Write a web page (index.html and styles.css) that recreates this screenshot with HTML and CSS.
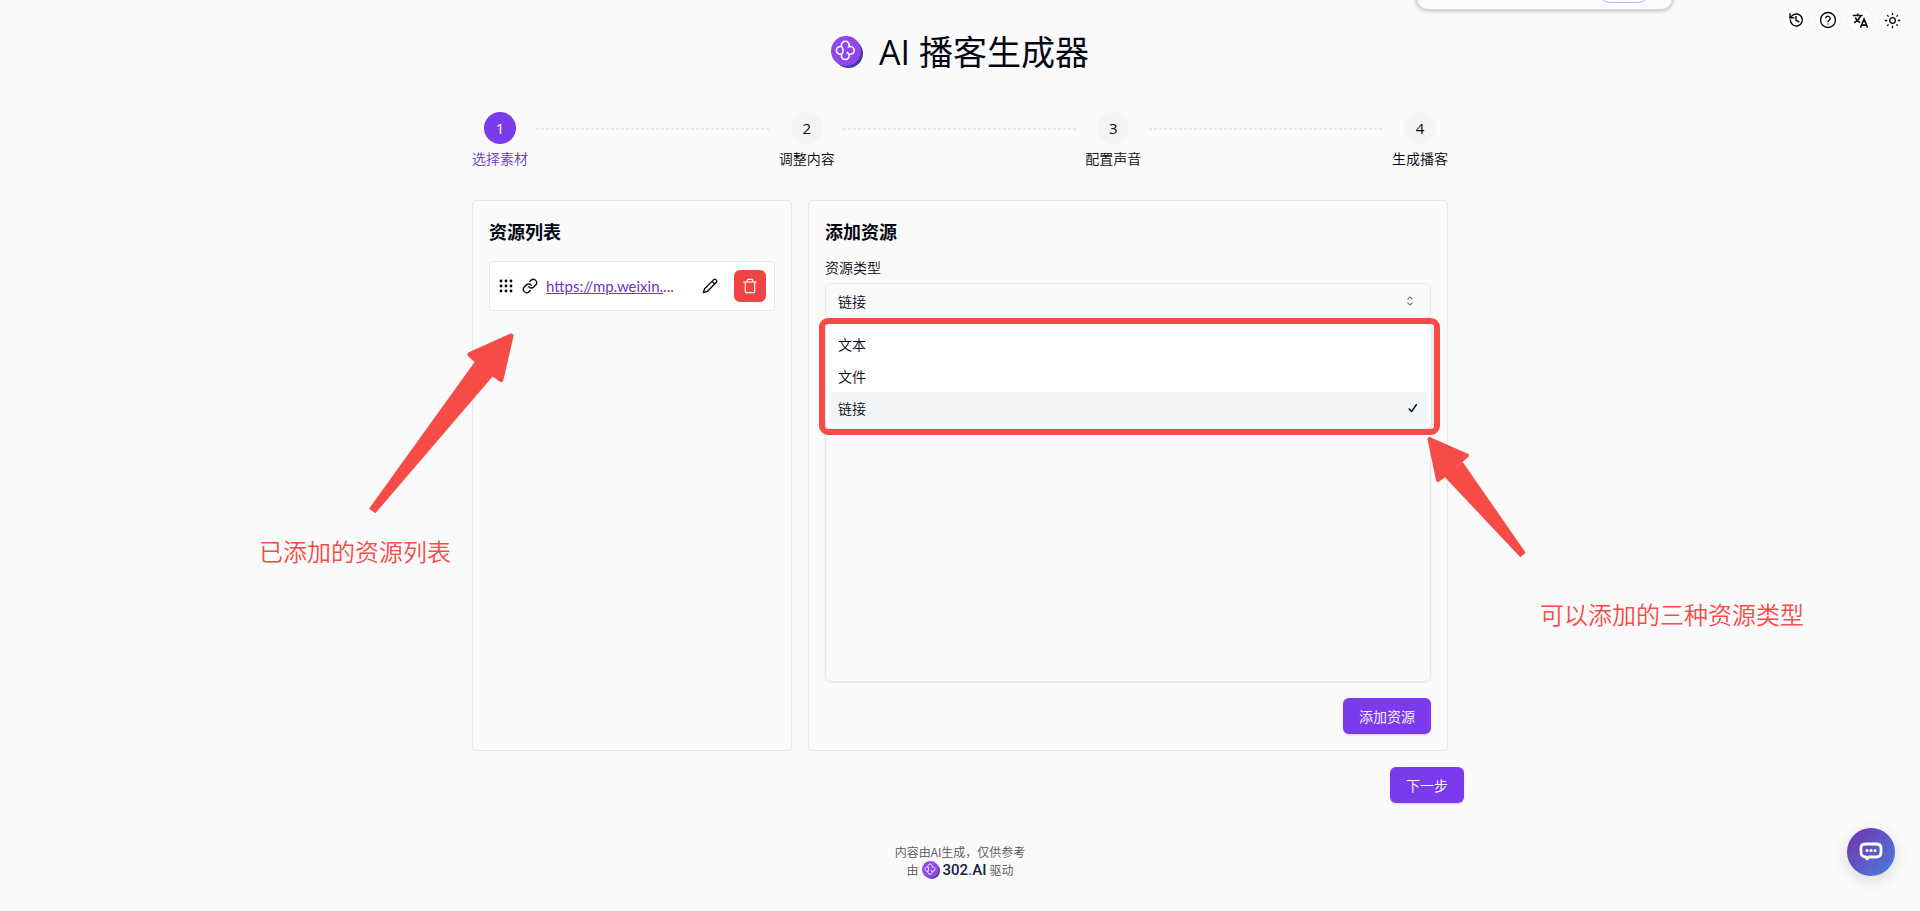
FILE: index.html
```
<!DOCTYPE html>
<html lang="zh-CN">
<head>
<meta charset="utf-8">
<meta name="viewport" content="width=device-width, initial-scale=1">
<title>AI 播客生成器</title>
<link rel="stylesheet" href="styles.css">
</head>
<body>
<svg class="defs" width="0" height="0" aria-hidden="true">
  <defs>
    <symbol id="logo" viewBox="0 0 32 32">
      <circle cx="17.500" cy="17.500" r="14.500" fill="#443aa0"/>
      <circle cx="15" cy="15" r="15" fill="#8e47ea"/>
      <path d="M10.800 10.800a3.900 3.900 0 1 1 7 0a3.900 3.900 0 1 1 0 7.200a3.900 3.900 0 1 1-7 0a3.900 3.900 0 1 1 0-7.200M10.800 10.800q2.400 3.600 0 7.200M17.800 18l-1.800-1.600" fill="none" stroke="#fff" stroke-width="1.500" stroke-linecap="round"/>
    </symbol>
  </defs>
</svg>

<div class="popup" aria-hidden="true"><span class="popup-pill"></span></div>

<nav class="tools" aria-label="工具">
  <button type="button" class="tool" aria-label="历史"><svg width="16" height="16" viewBox="0 0 24 24" fill="none" stroke="currentColor" stroke-width="2.200" stroke-linecap="square"><path d="M3.500 12a9 9 0 1 0 2.600-6.400L3 8.500M3 3v5.500h5.500M12 7v5.500l4 2"/></svg></button>
  <button type="button" class="tool" aria-label="帮助"><svg width="18" height="18" viewBox="0 0 24 24" fill="none" stroke="currentColor" stroke-width="1.800" stroke-linecap="round"><circle cx="12" cy="12" r="10"/><path d="M9.100 9a3 3 0 0 1 5.800 1c0 2-2.900 2.500-2.900 4M12 17.200v.1"/></svg></button>
  <button type="button" class="tool" aria-label="语言"><svg width="17" height="17" viewBox="0 0 24 24" fill="none" stroke="currentColor" stroke-width="2.200"><path d="M1 5h14M8 2v3M12 5c-1 4-4.500 8-9 10M4.500 8c1.500 3 4 5.500 7 7M12 22l5-12 5 12M14 18.500h6.500"/></svg></button>
  <button type="button" class="tool" aria-label="主题"><svg width="17" height="17" viewBox="0 0 24 24" fill="none" stroke="currentColor" stroke-width="1.900"><circle cx="12" cy="12" r="4"/><path d="M12 1v3.500M12 19.500V23M1 12h3.500M19.500 12H23M4.500 4.500l2 2M17.500 17.500l2 2M4.500 19.500l2-2M17.500 6.500l2-2"/></svg></button>
</nav>

<div class="page">
  <header class="title">
    <svg width="32" height="32" aria-hidden="true"><use href="#logo"/></svg>
    <h1>AI 播客生成器</h1>
  </header>

  <main>
    <ol class="steps">
      <li class="step active"><span class="num">1</span><span>选择素材</span></li>
      <li class="line" aria-hidden="true"></li>
      <li class="step"><span class="num">2</span><span>调整内容</span></li>
      <li class="line" aria-hidden="true"></li>
      <li class="step"><span class="num">3</span><span>配置声音</span></li>
      <li class="line" aria-hidden="true"></li>
      <li class="step"><span class="num">4</span><span>生成播客</span></li>
    </ol>

    <div class="panels">
      <section class="card">
        <h2>资源列表</h2>
        <div class="resource">
          <svg width="16" height="16" viewBox="0 0 16 16" fill="currentColor" aria-hidden="true"><circle cx="3" cy="3" r="1.400"/><circle cx="8" cy="3" r="1.400"/><circle cx="13" cy="3" r="1.400"/><circle cx="3" cy="8" r="1.400"/><circle cx="8" cy="8" r="1.400"/><circle cx="13" cy="8" r="1.400"/><circle cx="3" cy="13" r="1.400"/><circle cx="8" cy="13" r="1.400"/><circle cx="13" cy="13" r="1.400"/></svg>
          <svg width="16" height="16" viewBox="0 0 24 24" fill="none" stroke="currentColor" stroke-width="2" stroke-linecap="round" stroke-linejoin="round" aria-hidden="true"><path d="M10 13a5 5 0 0 0 7.540.540l3-3a5 5 0 0 0-7.070-7.070l-1.720 1.710"/><path d="M14 11a5 5 0 0 0-7.540-.540l-3 3a5 5 0 0 0 7.070 7.070l1.710-1.710"/></svg>
          <span class="url"><a href="#">https://mp.weixin.</a>...</span>
          <button type="button" class="icon-btn" aria-label="编辑"><svg width="16" height="16" viewBox="0 0 24 24" fill="none" stroke="currentColor" stroke-width="2" stroke-linejoin="round"><path d="M21.170 6.810a2.800 2.800 0 0 0-3.980-3.980L3.840 16.170 2 22l5.830-1.840zM15 5l4 4"/></svg></button>
          <button type="button" class="icon-btn danger" aria-label="删除"><svg width="16" height="16" viewBox="0 0 24 24" fill="none" stroke="currentColor" stroke-width="1.800" stroke-linejoin="round" stroke-linecap="round"><path d="M2.500 6h19M5 6v14.500a1.500 1.500 0 0 0 1.500 1.500h11a1.500 1.500 0 0 0 1.500-1.500V6M8 6V3.500A1.500 1.500 0 0 1 9.500 2h5A1.500 1.500 0 0 1 16 3.500V6"/></svg></button>
        </div>
      </section>

      <section class="card">
        <h2>添加资源</h2>
        <label class="label" for="kind">资源类型</label>
        <div class="select">
          <select id="kind"><option>文本</option><option>文件</option><option selected>链接</option></select>
          <svg class="chevrons" width="14" height="14" viewBox="0 0 15 15" fill="none" stroke="currentColor" stroke-width="1.200" aria-hidden="true"><path d="M4.800 5.800 7.500 3.200l2.700 2.600M4.800 9.200l2.700 2.600 2.700-2.600"/></svg>
          <ul class="menu" role="listbox" aria-label="资源类型">
            <li role="option">文本</li>
            <li role="option">文件</li>
            <li role="option" class="selected" aria-selected="true">链接<svg width="14" height="14" viewBox="0 0 15 15" fill="none" stroke="currentColor" stroke-width="1.500" aria-hidden="true"><path d="M4 8l3.200 3.200L12.500 3.500"/></svg></li>
          </ul>
        </div>
        <textarea class="content" aria-label="链接"></textarea>
        <div class="actions"><button type="button" class="primary">添加资源</button></div>
      </section>
    </div>
    <div class="next"><button type="button" class="primary">下一步</button></div>
  </main>

  <footer>
    <p>内容由AI生成，仅供参考</p>
    <p class="powered">由 <svg width="18" height="18" aria-hidden="true"><use href="#logo"/></svg><a href="#">302<i>.</i>AI</a> 驱动</p>
  </footer>

  <div class="notes">
    <svg width="1300" height="600" viewBox="256 0 1300 600" fill="#f74b48" stroke="#f74b48" stroke-linejoin="round" aria-hidden="true">
      <path stroke-width="5" d="M511 336 470 354.500 478 361.500 492 373 501 379.500z"/>
      <path stroke="none" d="M475 361.500 369 508.700 375.300 513.300 493 376z"/>
      <path stroke-width="4" d="M1429.500 439 1467 455.500 1459 462.500 1446 474 1438 480z"/>
      <path stroke="none" d="M1462.700 462 1525.700 552.700 1520.300 557.300 1444.700 477z"/>
    </svg>
    <span class="note note-list">已添加的资源列表</span>
    <span class="note note-type">可以添加的三种资源类型</span>
  </div>
</div>

<button type="button" class="chat" aria-label="客服"><svg width="24" height="24" viewBox="0 0 24 24" fill="none" stroke="#fff"><path stroke-width="2.800" stroke-linejoin="round" d="M7 4h10q5 0 5 4v4q0 5-5 5h-7l-2 2-1-2q-5 0-5-5V8q0-4 5-4z"/><path stroke-width="3" stroke-linecap="round" d="M8 10.500h.1M12 10.500h.1M16 10.500h.1"/></svg></button>
</body>
</html>
```
FILE: styles.css
```
* { box-sizing: border-box; }

body {
  margin: 0;
  background: #fafafa;
  color: #030712;
  font: 14px/20px "Noto Sans CJK SC", sans-serif;
  font-weight: 350;
}

h1, h2, p, ol, ul { margin: 0; padding: 0; }
ol, ul { list-style: none; }
svg { display: block; flex: none; }
button, select, textarea { font: inherit; color: inherit; }
button { border: 0; padding: 0; cursor: pointer; }
.defs { position: absolute; }

.popup {
  position: absolute;
  top: -30px;
  right: 247px;
  width: 257px;
  height: 40px;
  background: #fdfaff;
  border: 1px solid #d5d6dc;
  border-radius: 12px;
  box-shadow: 0 1px 4px #0004;
}
.popup-pill {
  position: absolute;
  right: 22px;
  bottom: 6px;
  width: 52px;
  height: 24px;
  border: 1px solid #a9c4e8;
  border-radius: 12px;
}

.tools { position: absolute; top: 8px; right: 16px; display: flex; gap: 8px; }
.tool {
  display: grid;
  place-items: center;
  width: 24px;
  height: 24px;
  border-radius: 50%;
  background: #fff;
  box-shadow: 0 0 2px #0001;
}

.page { position: relative; max-width: 1008px; margin: 0 auto; padding: 32px 0; }
.title { display: flex; align-items: center; justify-content: center; gap: 16px; height: 40px; }
.title h1 { font: 400 34px/40px "Open Sans", "Noto Sans CJK SC", sans-serif; }

.steps { display: flex; gap: 8px; margin: 40px 16px 32px; }
.step { display: flex; flex-direction: column; align-items: center; gap: 4px; }
.num {
  display: grid;
  place-items: center;
  width: 32px;
  height: 32px;
  border-radius: 50%;
  background: #f3f4f6;
  font: 400 15px/20px "Open Sans", sans-serif;
}
.active { color: #6d35c9; }
.active .num { background: #7c3aed; color: #fff; }
.line {
  flex: 1;
  height: 2px;
  margin-top: 16px;
  background: repeating-linear-gradient(90deg, #e5e7eb 0 3px, transparent 3px 5px);
}

.panels { display: grid; grid-template-columns: 1fr 2fr; gap: 16px; margin: 0 16px; }
.card { min-width: 0; padding: 16px; border: 1px solid #e5e7eb; border-radius: 4px; }
.card h2 { font-size: 18px; line-height: 28px; font-weight: 700; }

.resource {
  display: flex;
  align-items: center;
  gap: 8px;
  margin-top: 16px;
  padding: 8px;
  border: 1px solid #e5e7eb;
  border-radius: 4px;
  background: #fff;
}
.url { flex: 1; min-width: 0; font: 400 15px/24px Lato, sans-serif; white-space: nowrap; color: #6d35c9; }
.url a { color: inherit; }
.icon-btn { display: grid; place-items: center; width: 32px; height: 32px; border-radius: 6px; background: none; }
.danger { background: #ef4444; color: #fff; }

.label { display: block; margin: 12px 0 6px; }
.select { position: relative; }
.select select {
  display: block;
  appearance: none;
  width: 100%;
  height: 36px;
  padding: 0 12px;
  border: 1px solid #e5e7eb;
  border-radius: 6px;
  background: none;
}
.chevrons { position: absolute; top: 11px; right: 14px; color: #777; }
.menu {
  position: absolute;
  z-index: 1;
  top: 40px;
  left: 0;
  right: -1px;
  padding: 4px;
  border: 1px solid #e5e7eb;
  border-radius: 6px;
  background: #fff;
  box-shadow: 0 2px 4px #0002;
}
.menu::after {
  content: "";
  position: absolute;
  inset: -6px -9px -7px -7px;
  border: 6px solid #f74b48;
  border-radius: 9px;
}
.menu li {
  display: flex;
  align-items: center;
  justify-content: space-between;
  padding: 6px 8px;
  border-radius: 4px;
}
.menu .selected { background: #f3f4f6; }

.content {
  display: block;
  width: 100%;
  height: 347px;
  margin: 16px 0;
  border: 1px solid #e5e7eb;
  border-radius: 6px;
  background: none;
  box-shadow: 0 1px 2px #0001;
  resize: none;
}
.actions, .next { display: flex; justify-content: flex-end; }
.next { margin-top: 16px; }
.primary {
  padding: 8px 16px;
  border-radius: 6px;
  background: #7c3aed;
  color: #fff;
  box-shadow: 0 1px 2px #7c3aed44;
}

footer { margin-top: 40px; text-align: center; font-size: 12px; line-height: 18px; color: #555; }
.powered { display: flex; justify-content: center; align-items: center; gap: 3px; }
.powered a { font: 500 15px/18px Roboto, sans-serif; color: #14213d; text-decoration: none; }
.powered i { font-style: normal; color: #9747f0; }

.notes { position: absolute; inset: 0; z-index: 2; pointer-events: none; }
.notes svg { position: absolute; top: 0; left: -200px; }
.note { position: absolute; font-size: 24px; line-height: 32px; white-space: nowrap; color: #f74b48; }
.note-list { top: 535px; left: -197px; }
.note-type { top: 598px; left: 1084px; }

.chat {
  position: fixed;
  right: 25px;
  bottom: 35px;
  display: grid;
  place-items: center;
  width: 48px;
  height: 48px;
  border-radius: 50%;
  background: linear-gradient(135deg, #7430a8, #4a7fe0);
  box-shadow: 0 4px 16px #0002;
}
```
